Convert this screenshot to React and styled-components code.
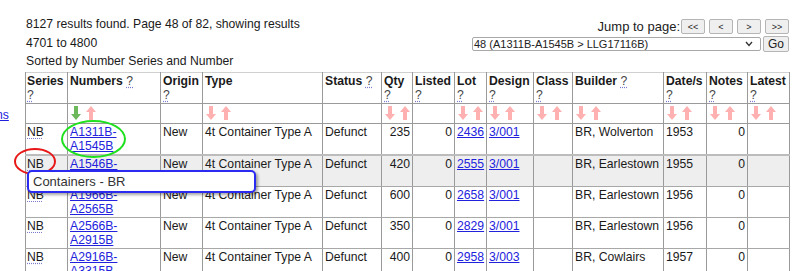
import React from "react";
import styled, { createGlobalStyle } from "styled-components";

const GlobalStyle = createGlobalStyle`
  html, body { margin: 0; padding: 0; background: #fff; }
  body {
    font-family: "Liberation Sans", Arial, sans-serif;
    font-size: 12.2px;
    color: #1a1a1a;
  }
`;

const Page = styled.div`
  position: relative;
  display: flex;
  width: 800px;
`;

const SideNav = styled.div`
  width: 25px;
  flex: none;
  overflow: hidden;
  padding-top: 108px;
  line-height: 14px;
`;

const SideLink = styled.a`
  display: inline-block;
  margin-left: -4px;
  color: #2222dd;
  text-decoration: underline;
  cursor: pointer;
`;

const Main = styled.div`
  width: 764px;
  display: flex;
  flex-direction: column;
`;

const TopBar = styled.div`
  display: flex;
  justify-content: space-between;
  height: 72px;
`;

const Summary = styled.div`
  padding: 15px 0 0 1px;
  line-height: 18.5px;
`;

const Jump = styled.div`
  display: flex;
  flex-direction: column;
  align-items: flex-end;
  padding-top: 19px;
  gap: 2px;
`;

const JumpRow = styled.div`
  display: flex;
  align-items: center;
  gap: ${(p) => p.$gap || 4}px;
  font-size: 13px;
`;

const JumpLabel = styled.span`
  margin-right: -3px;
  color: #222;
`;

const PageButton = styled.button`
  font-family: "Liberation Sans", Arial, sans-serif;
  font-size: ${(p) => p.$fs || 9}px;
  width: ${(p) => p.$w || 24}px;
  height: ${(p) => p.$h || 15}px;
  padding: 0;
  background: #efefef;
  border: 1px solid #b5b5b5;
  border-radius: 2px;
  color: #222;
`;

const Select = styled.div`
  position: relative;
  width: 289px;
  height: 14px;
  box-sizing: border-box;
  border: 1px solid #a8a8a8;
  border-radius: 2px;
  font-size: 11px;
  line-height: 12px;
  padding-left: 1px;
  color: #222;
  background: #fff;
`;

const Chevron = styled.svg`
  position: absolute;
  right: 7px;
  top: 3px;
`;

const Table = styled.table`
  border-collapse: collapse;
  table-layout: fixed;
  width: 764px;
  line-height: 14px;
  border-top: 1px solid #d0d0d0;
`;

const Th = styled.th`
  text-align: left;
  vertical-align: top;
  font-weight: bold;
  padding: 1px 2px 1px 2px;
  border-left: 1px solid #9a9a9a;
  border-right: 1px solid #9a9a9a;
  border-bottom: 1px solid #9a9a9a;
  &:first-child { padding-left: 1px; }
`;

const Help = styled.span`
  font-weight: normal;
  color: #444;
  text-decoration: underline dotted #7a7ad0;
  text-underline-offset: 2px;
`;

const ArrowCell = styled.td`
  padding: 2px 2px 0 3px;
  height: 17px;
  vertical-align: top;
  border: 1px solid #9a9a9a;
  border-top: none;
`;

const Arrows = styled.div`
  display: flex;
  gap: 5px;
`;

const Row = styled.tr`
  background: ${(p) => (p.$hover ? "#eeeeee" : "#fff")};
  ${(p) => (p.$hover ? "border-top: 2px solid #bcbcbc;" : "")}
`;

const Td = styled.td`
  vertical-align: top;
  padding: 1px 2px 1px 2px;
  height: 28px;
  text-align: ${(p) => (p.$num ? "right" : "left")};
  border-left: 1px solid #9a9a9a;
  border-right: 1px solid #9a9a9a;
  border-bottom: 1px solid #a8a8a8;
  white-space: ${(p) => (p.$nowrap ? "nowrap" : "normal")};
  &:first-child { padding-left: 1px; }
`;

const Abbr = styled.span`
  text-decoration: underline dotted #7a7ad0;
  text-underline-offset: 2px;
`;

const Link = styled.a`
  color: #2222dd;
  text-decoration: underline;
  cursor: pointer;
`;

const Ring = styled.div`
  position: absolute;
  left: ${(p) => p.$x}px;
  top: ${(p) => p.$y}px;
  width: ${(p) => p.$w}px;
  height: ${(p) => p.$h}px;
  border: 2px solid ${(p) => p.$c};
  border-radius: 50%;
  box-sizing: border-box;
  pointer-events: none;
`;

const Tooltip = styled.div`
  position: absolute;
  left: 27px;
  top: 170px;
  width: 229px;
  height: 23px;
  box-sizing: border-box;
  border: 2px solid #2a2af0;
  border-radius: 5px;
  background: #fff;
  box-shadow: 2px 2px 3px rgba(0, 0, 0, 0.35);
  padding: 2px 0 0 4px;
  font-size: 13px;
  line-height: 16px;
  color: #333;
`;

const Arrow = ({ up, color }) => (
  <svg width="10" height="14" viewBox="0 0 10 14">
    {up ? (
      <path d="M5 0 L10 6 L7 6 L7 14 L3 14 L3 6 L0 6 Z" fill={color} />
    ) : (
      <path d="M3 0 L7 0 L7 8 L10 8 L5 14 L0 8 L3 8 Z" fill={color} />
    )}
  </svg>
);

const PINK = "#ffb0b0";
const GREEN = "#6cb85a";

const cols = [42, 93, 42, 120, 59, 31, 42, 32, 47, 39, 91, 43, 41, 42];

const headers = [
  { t: "Series", help: true, br: true },
  { t: "Numbers", help: true },
  { t: "Origin", help: true, br: true },
  { t: "Type" },
  { t: "Status", help: true },
  { t: "Qty", help: true, br: true },
  { t: "Listed", help: true, br: true },
  { t: "Lot", help: true, br: true },
  { t: "Design", help: true, br: true },
  { t: "Class", help: true, br: true },
  { t: "Builder", help: true },
  { t: "Date/s", help: true, br: true },
  { t: "Notes", help: true, br: true },
  { t: "Latest", help: true, br: true },
];

const sortable = [false, "green", false, true, false, true, false, true, true, true, true, true, true, true];

const rows = [
  ["A1311B-", "A1545B", "235", "2436", "3/001", "BR, Wolverton", "1953"],
  ["A1546B-", "A1965B", "420", "2555", "3/001", "BR, Earlestown", "1955"],
  ["A1966B-", "A2565B", "600", "2658", "3/001", "BR, Earlestown", "1956"],
  ["A2566B-", "A2915B", "350", "2829", "3/001", "BR, Earlestown", "1956"],
  ["A2916B-", "A3315B", "400", "2958", "3/003", "BR, Cowlairs", "1957"],
];

export default function App() {
  return (
    <>
      <GlobalStyle />
      <Page>
        <SideNav>
          <SideLink>ns</SideLink>
        </SideNav>
        <Main>
          <TopBar>
            <Summary>
              <div>8127 results found. Page 48 of 82, showing results</div>
              <div>4701 to 4800</div>
              <div>Sorted by Number Series and Number</div>
            </Summary>
            <Jump>
              <JumpRow>
                <JumpLabel>Jump to page:</JumpLabel>
                <PageButton>&lt;&lt;</PageButton>
                <PageButton>&lt;</PageButton>
                <PageButton>&gt;</PageButton>
                <PageButton>&gt;&gt;</PageButton>
              </JumpRow>
              <JumpRow $gap={2}>
                <Select>
                  48 (A1311B-A1545B &gt; LLG17116B)
                  <Chevron width="8" height="6" viewBox="0 0 8 6">
                    <path d="M1 1 L4 4.5 L7 1" fill="none" stroke="#333" strokeWidth="1.3" />
                  </Chevron>
                </Select>
                <PageButton $w={26} $h={16} $fs={12}>Go</PageButton>
              </JumpRow>
            </Jump>
          </TopBar>
          <Table>
            <colgroup>
              {cols.map((w, i) => (
                <col key={i} style={{ width: w }} />
              ))}
            </colgroup>
            <thead>
              <tr>
                {headers.map((h, i) => (
                  <Th key={i}>
                    {h.t}
                    {h.help && (h.br ? <br /> : " ")}
                    {h.help && <Help>?</Help>}
                  </Th>
                ))}
              </tr>
              <tr>
                {sortable.map((s, i) => (
                  <ArrowCell key={i}>
                    {s && (
                      <Arrows>
                        <Arrow color={s === "green" ? GREEN : PINK} />
                        <Arrow up color={PINK} />
                      </Arrows>
                    )}
                  </ArrowCell>
                ))}
              </tr>
            </thead>
            <tbody>
              {rows.map((r, i) => (
                <Row key={i} $hover={i === 1}>
                  <Td><Abbr>NB</Abbr></Td>
                  <Td>
                    <Link>{r[0]}<br />{r[1]}</Link>
                  </Td>
                  <Td>New</Td>
                  <Td $nowrap>4t Container Type A</Td>
                  <Td>Defunct</Td>
                  <Td $num>{r[2]}</Td>
                  <Td $num>0</Td>
                  <Td><Link>{r[3]}</Link></Td>
                  <Td><Link>{r[4]}</Link></Td>
                  <Td></Td>
                  <Td $nowrap>{r[5]}</Td>
                  <Td>{r[6]}</Td>
                  <Td $num>0</Td>
                  <Td></Td>
                </Row>
              ))}
            </tbody>
          </Table>
        </Main>
        <Ring $x={61} $y={120} $w={65} $h={38} $c="#1ee01e" />
        <Ring $x={14} $y={148} $w={42} $h={27} $c="#e81818" />
        <Tooltip>Containers - BR</Tooltip>
      </Page>
    </>
  );
}
